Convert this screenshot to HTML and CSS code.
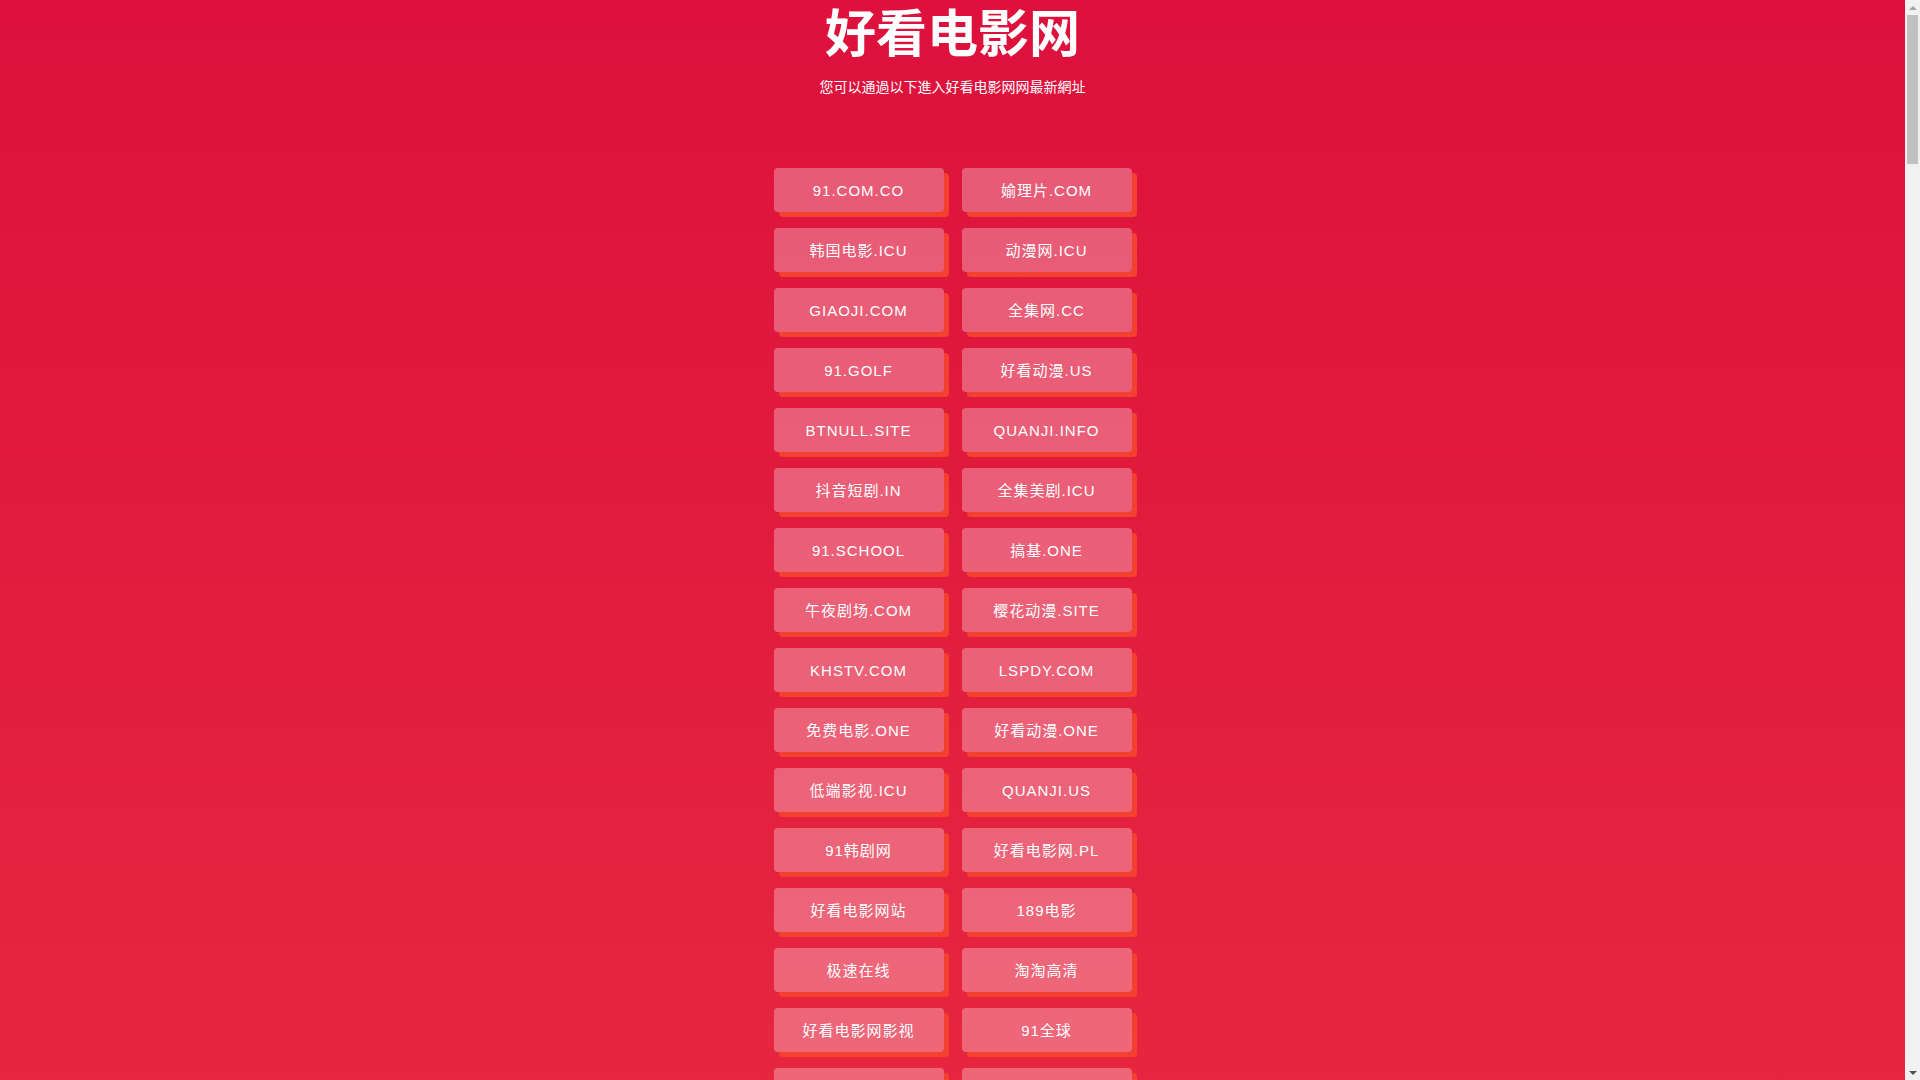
FILE: index.html
```html
<!DOCTYPE html>
<html lang="zh-CN">
<head>
<meta charset="utf-8">
<title>好看电影网</title>
<link rel="stylesheet" href="styles.css">
</head>
<body>
<div class="page">
  <header class="head">
    <h1 class="title">好看电影网</h1>
    <p class="subtitle">您可以通過以下進入好看电影网网最新網址</p>
  </header>
  <main class="links">
    <a class="link" href="#">91.COM.CO</a>
    <a class="link" href="#">媮理片.COM</a>
    <a class="link" href="#">韩国电影.ICU</a>
    <a class="link" href="#">动漫网.ICU</a>
    <a class="link" href="#">GIAOJI.COM</a>
    <a class="link" href="#">全集网.CC</a>
    <a class="link" href="#">91.GOLF</a>
    <a class="link" href="#">好看动漫.US</a>
    <a class="link" href="#">BTNULL.SITE</a>
    <a class="link" href="#">QUANJI.INFO</a>
    <a class="link" href="#">抖音短剧.IN</a>
    <a class="link" href="#">全集美剧.ICU</a>
    <a class="link" href="#">91.SCHOOL</a>
    <a class="link" href="#">搞基.ONE</a>
    <a class="link" href="#">午夜剧场.COM</a>
    <a class="link" href="#">樱花动漫.SITE</a>
    <a class="link" href="#">KHSTV.COM</a>
    <a class="link" href="#">LSPDY.COM</a>
    <a class="link" href="#">免费电影.ONE</a>
    <a class="link" href="#">好看动漫.ONE</a>
    <a class="link" href="#">低端影视.ICU</a>
    <a class="link" href="#">QUANJI.US</a>
    <a class="link" href="#">91韩剧网</a>
    <a class="link" href="#">好看电影网.PL</a>
    <a class="link" href="#">好看电影网站</a>
    <a class="link" href="#">189电影</a>
    <a class="link" href="#">极速在线</a>
    <a class="link" href="#">淘淘高清</a>
    <a class="link" href="#">好看电影网影视</a>
    <a class="link" href="#">91全球</a>
    <a class="link" href="#">好看电影网在线</a>
    <a class="link" href="#">好看电影网高清</a>
  </main>
</div>
<div class="scrollbar" aria-hidden="true">
  <div class="sb-button"><span class="sb-arrow-up"></span></div>
  <div class="sb-track"><div class="sb-thumb"></div></div>
  <div class="sb-button"><span class="sb-arrow-down"></span></div>
</div>
</body>
</html>
```

FILE: styles.css
```css
html, body {
  margin: 0;
  padding: 0;
}
html::-webkit-scrollbar {
  display: none;
}
body {
  background: linear-gradient(180deg, #dd113c 0%, #e6263f 100%);
  background-attachment: fixed;
  font-family: "Liberation Sans", "Noto Sans CJK SC", sans-serif;
  color: #ffffff;
}
.page {
  margin-right: 15px;
  display: flex;
  flex-direction: column;
  align-items: center;
  padding-bottom: 40px;
}
.head {
  display: flex;
  flex-direction: column;
  align-items: center;
}
.title {
  margin: 5px 0 0 0;
  font-family: "Noto Sans CJK SC", sans-serif;
  font-size: 51px;
  line-height: 1;
  font-weight: 700;
}
.subtitle {
  margin: 23px 0 0 0;
  font-family: "Noto Sans CJK SC", sans-serif;
  font-size: 14px;
  line-height: 1;
}
.links {
  margin-top: 75px;
  display: grid;
  grid-template-columns: 170px 170px;
  column-gap: 18px;
  row-gap: 16px;
}
.link {
  display: flex;
  align-items: center;
  justify-content: center;
  height: 44px;
  border-radius: 4px;
  background: rgba(255, 255, 255, 0.3);
  box-shadow: 5px 5px 0 #f4412f;
  color: #ffffff;
  text-decoration: none;
  font-size: 15px;
  line-height: 1;
  letter-spacing: 1px;
  white-space: nowrap;
}

/* classic scrollbar drawn over the right edge */
.scrollbar {
  position: fixed;
  top: 0;
  right: 0;
  width: 15px;
  height: 100vh;
  background: #f1f1f1;
  display: flex;
  flex-direction: column;
}
.sb-button {
  height: 15px;
  flex: 0 0 15px;
  display: flex;
  align-items: center;
  justify-content: center;
}
.sb-arrow-up {
  width: 0;
  height: 0;
  border-left: 4px solid transparent;
  border-right: 4px solid transparent;
  border-bottom: 4px solid #a3a3a3;
}
.sb-arrow-down {
  width: 0;
  height: 0;
  border-left: 4px solid transparent;
  border-right: 4px solid transparent;
  border-top: 4px solid #505050;
}
.sb-track {
  flex: 1;
  display: flex;
  flex-direction: column;
}
.sb-thumb {
  height: 149px;
  margin: 0 2px;
  background: #c1c1c1;
}
```
